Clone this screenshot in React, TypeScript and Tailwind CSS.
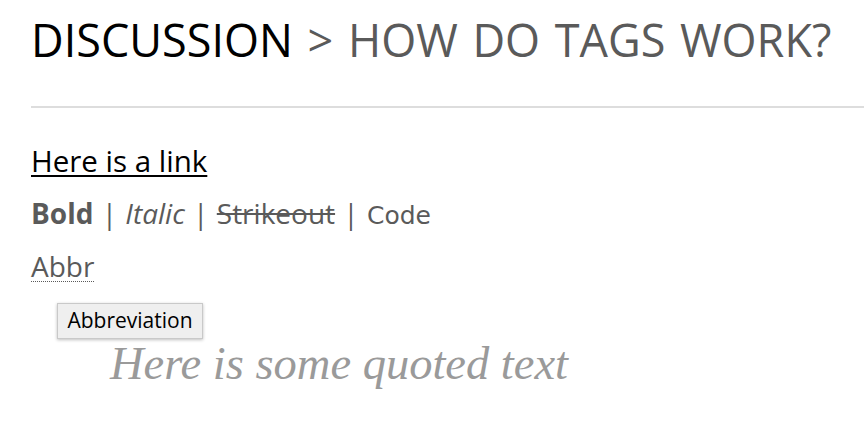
export default function App() {
  return (
    <div className="relative min-h-[432px] w-[864px] overflow-hidden bg-white font-['Open_Sans',sans-serif] text-[#5a5a5a]">
      {/* Page heading */}
      <h1 className="mt-[16px] pl-[31px] text-[45px] leading-[48px] whitespace-nowrap [word-spacing:3px]">
        <span className="text-black">DISCUSSION</span> &gt; HOW DO TAGS WORK?
      </h1>
      <hr className="ml-[31px] mt-[42px] h-[2px] border-0 bg-[#dddddd]" />

      {/* Post body */}
      <div className="mt-[27px] pl-[31px] text-[28px] leading-[52px]">
        <p>
          <a href="#" className="text-[29.5px] text-black underline decoration-2 underline-offset-[3px]">
            Here is a link
          </a>
        </p>
        <p className="[word-spacing:1px]">
          <strong className="font-bold">Bold</strong> | <em className="italic">Italic</em> |{' '}
          <span className="line-through">Strikeout</span> |{' '}
          <code className="font-['DejaVu_Sans',sans-serif] text-[25px]">Code</code>
        </p>
        <p className="-mt-[2px]">
          <abbr title="Abbreviation" className="underline decoration-dotted decoration-1 underline-offset-[4px]">
            Abbr
          </abbr>
        </p>
      </div>

      <blockquote className="mt-[46px] pl-[110px] font-['Liberation_Serif',serif] text-[46.5px] leading-[52px] italic text-[#9a9a9a]">
        Here is some quoted text
      </blockquote>

      {/* Native-looking tooltip for the abbreviation */}
      <div className="absolute left-[57px] top-[303px] flex h-[36px] w-[146px] items-center justify-center border border-[#c9c9c9] bg-[#efefef] text-[21px] text-black shadow-[0_1px_3px_rgba(0,0,0,0.25)]">
        Abbreviation
      </div>
    </div>
  )
}
